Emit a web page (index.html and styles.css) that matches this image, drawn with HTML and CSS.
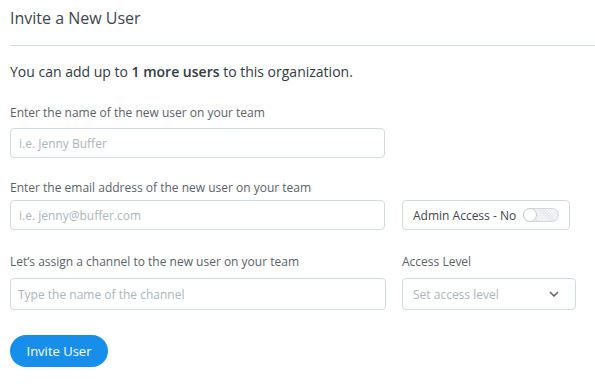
FILE: index.html
```html
<!DOCTYPE html>
<html lang="en">
<head>
  <meta charset="UTF-8">
  <title>Invite a New User</title>
  <link rel="stylesheet" href="styles.css">
</head>
<body>
  <div class="invite">
    <h2 class="title">Invite a New User</h2>
    <hr class="divider">

    <p class="limit">You can add up to <strong>1 more users</strong> to this organization.</p>

    <div class="field name-field">
      <label>Enter the name of the new user on your team</label>
      <input type="text" class="text-input wide" placeholder="i.e. Jenny Buffer">
    </div>

    <div class="row email-row">
      <div class="field">
        <label>Enter the email address of the new user on your team</label>
        <input type="text" class="text-input wide" placeholder="i.e. jenny@buffer.com">
      </div>
      <div class="admin-box">
        <span>Admin Access - No</span>
        <span class="toggle"><span class="knob"></span></span>
      </div>
    </div>

    <div class="row channel-row">
      <div class="field">
        <label>Let’s assign a channel to the new user on your team</label>
        <input type="text" class="text-input wide tall" placeholder="Type the name of the channel">
      </div>
      <div class="field">
        <label>Access Level</label>
        <div class="select">
          <span>Set access level</span>
          <svg width="10" height="6" viewBox="0 0 10 6"><path d="M1 1l4 4 4-4" fill="none" stroke="#59626a" stroke-width="1.5"/></svg>
        </div>
      </div>
    </div>

    <button class="invite-btn">Invite User</button>
  </div>
</body>
</html>
```

FILE: styles.css
```css
body {
  margin: 0;
  font-family: "Open Sans", sans-serif;
  color: #323b43;
  background: #fff;
}
.invite { padding: 7px 0 0 10px; }
.title {
  margin: 0;
  font-size: 16px;
  font-weight: 400;
  line-height: 22px;
  color: #3d464e;
}
.divider {
  margin: 16px 0 0;
  border: none;
  border-top: 1px solid #d5dbe2;
}
.limit {
  margin: 16px 0 0;
  font-size: 14px;
  line-height: 20px;
}
.limit strong { font-weight: 600; }
.field label {
  display: block;
  font-size: 12px;
  line-height: 16px;
  color: #59626a;
  margin-bottom: 7px;
}
.name-field { margin-top: 23px; }
.row {
  display: flex;
  align-items: flex-end;
  gap: 16px;
}
.email-row { margin-top: 22px; }
.email-row .field label { margin-bottom: 4px; }
.channel-row { margin-top: 24px; }
.channel-row .field label { margin-bottom: 8px; }
.text-input {
  display: block;
  box-sizing: border-box;
  height: 30px;
  padding: 0 8px;
  border: 1px solid #d2d9e0;
  border-radius: 4px;
  font-family: inherit;
  font-size: 12px;
  color: #323b43;
  outline: none;
}
.text-input::placeholder { color: #abb5be; }
.wide { width: 375px; }
.tall { height: 32px; width: 376px; padding-left: 7px; }
.admin-box {
  box-sizing: border-box;
  width: 168px;
  height: 30px;
  margin-left: 1px;
  display: flex;
  align-items: center;
  gap: 7px;
  padding: 0 10px;
  border: 1px solid #d2d9e0;
  border-radius: 4px;
  font-size: 12px;
  white-space: nowrap;
  color: #3d464e;
}
.toggle {
  position: relative;
  flex-shrink: 0;
  width: 36px;
  height: 14px;
  box-sizing: border-box;
  border: 1px solid #d0d7de;
  border-radius: 7px;
  background: repeating-linear-gradient(45deg, #f3f5f7 0 1px, #e4e8ec 1px 2px);
}
.knob {
  position: absolute;
  left: -1px;
  top: -1px;
  width: 14px;
  height: 14px;
  box-sizing: border-box;
  border: 1px solid #c3cbd3;
  border-radius: 50%;
  background: #fff;
}
.select {
  box-sizing: border-box;
  width: 174px;
  height: 32px;
  display: flex;
  align-items: center;
  justify-content: space-between;
  padding: 0 16px 0 10px;
  border: 1px solid #d2d9e0;
  border-radius: 4px;
  font-size: 12px;
  color: #abb5be;
}
.invite-btn {
  margin-top: 25px;
  width: 98px;
  height: 32px;
  padding: 0;
  border: none;
  border-radius: 16px;
  background: #168eea;
  color: #fff;
  font-family: inherit;
  font-size: 13px;
  cursor: pointer;
}
```
